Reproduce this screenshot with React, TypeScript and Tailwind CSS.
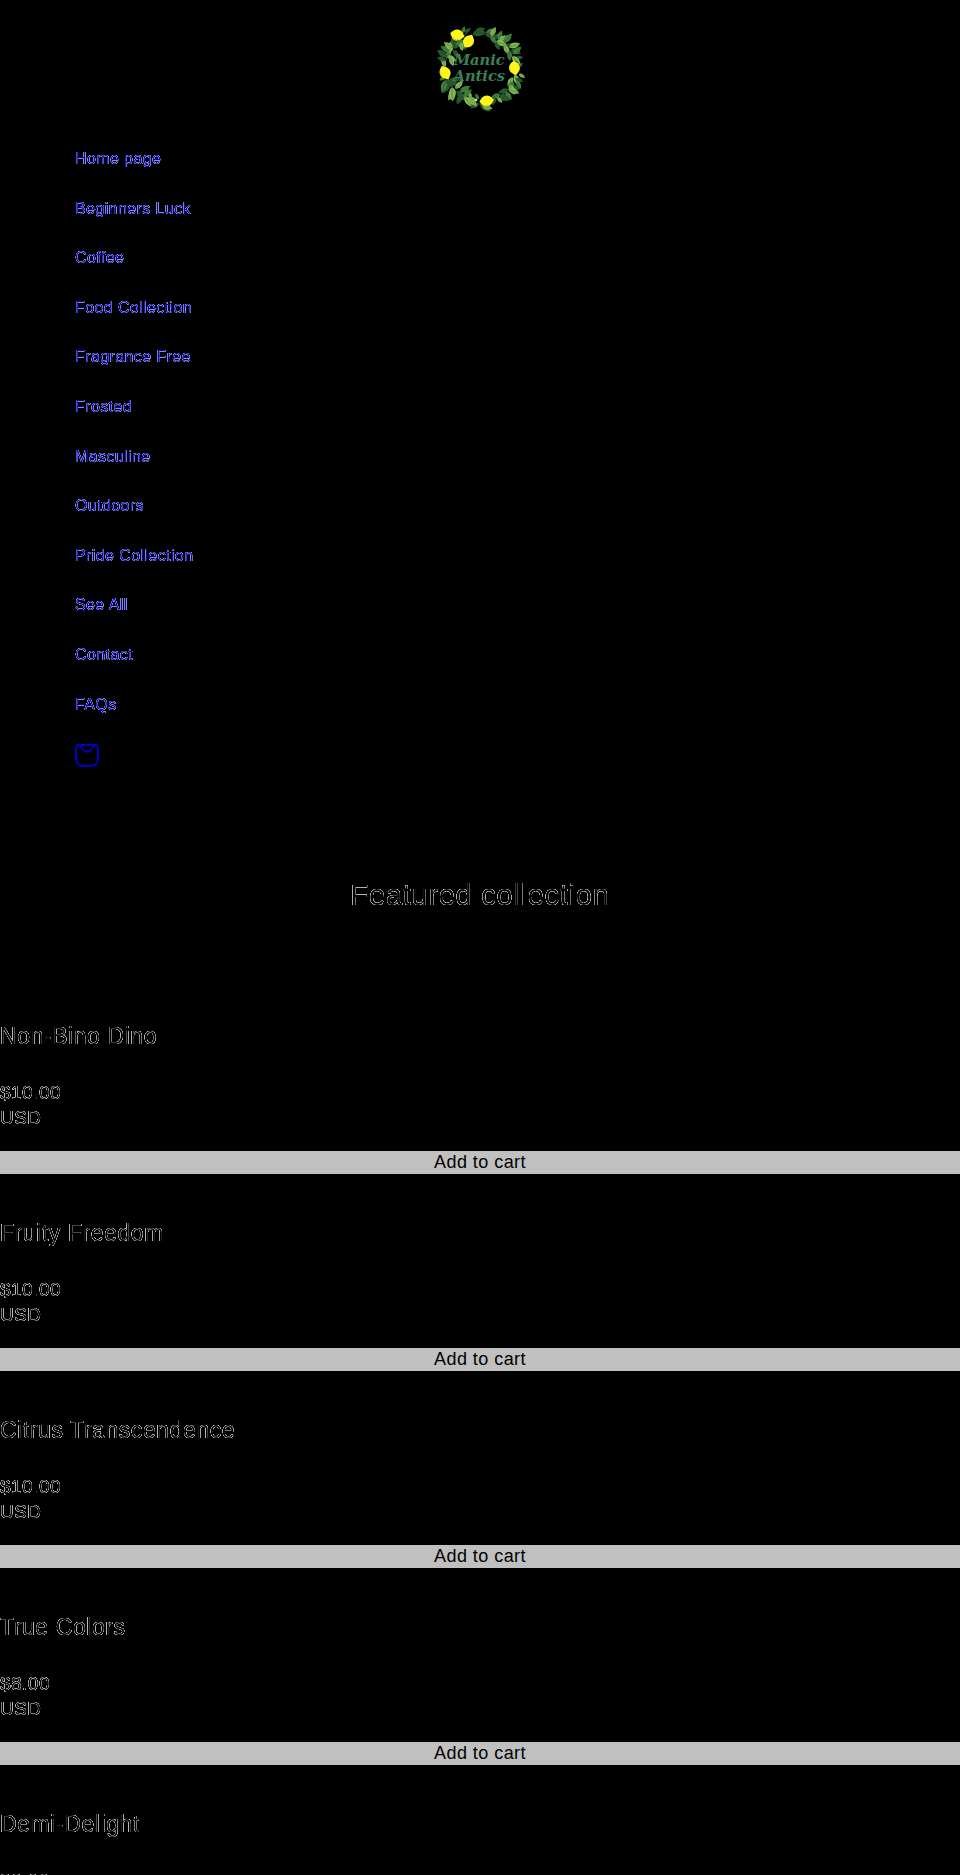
const LINKS = [
  "Home page",
  "Beginners Luck",
  "Coffee",
  "Food Collection",
  "Fragrance Free",
  "Frosted",
  "Masculine",
  "Outdoors",
  "Pride Collection",
  "See All",
  "Contact",
  "FAQs",
];

const PRODUCTS = [
  { name: "Non-Bino Dino", price: "$10.00" },
  { name: "Fruity Freedom", price: "$10.00" },
  { name: "Citrus Transcendence", price: "$10.00" },
  { name: "True Colors", price: "$8.00" },
  { name: "Demi-Delight", price: "$8.00" },
];

// Stacked shadows sit exactly behind the glyphs, so only the soft edges show.
const EDGE = "will-change-transform text-black [text-shadow:0_0_#fff,0_0_#fff,0_0_#fff,0_0_#fff,0_0_#fff,0_0_#fff,0_0_#fff,0_0_#fff]";
const EDGE_BLUE = "will-change-transform text-[#0000b4] [text-shadow:0_0_#ddf,0_0_#ddf,0_0_#ddf,0_0_#ddf,0_0_#ddf,0_0_#ddf]";

const DARK = "#28592f";
const MID = "#43803c";
const LIGHT = "#80b854";

// x, y, direction in degrees, length, fill
const LEAVES: [number, number, number, number, string][] = [
  [158, 72, -8, 40, DARK], [165, 66, -20, 32, DARK], [198, 71, -28, 30, MID], [196, 72, 20, 30, DARK],
  [214, 78, -65, 30, LIGHT], [218, 82, -15, 26, DARK], [212, 78, 55, 28, MID], [235, 90, -70, 30, MID],
  [238, 92, -32, 28, LIGHT], [228, 94, 20, 36, LIGHT], [225, 98, 55, 26, DARK], [252, 98, -50, 36, MID],
  [258, 106, 5, 32, DARK], [252, 105, 62, 32, LIGHT], [268, 112, -20, 34, LIGHT], [273, 120, 20, 32, DARK],
  [268, 122, 88, 30, MID], [280, 132, -42, 32, MID], [286, 145, -10, 24, DARK], [276, 140, 42, 34, LIGHT],
  [286, 152, 80, 28, DARK], [296, 172, -50, 18, MID], [296, 192, 30, 22, LIGHT], [284, 194, 70, 34, LIGHT],
  [286, 206, 20, 25, DARK], [278, 202, 120, 30, LIGHT], [290, 214, 60, 26, MID], [277, 214, 105, 34, MID],
  [274, 230, 15, 28, DARK], [270, 225, 65, 32, LIGHT], [266, 238, 20, 34, LIGHT], [264, 238, 160, 30, DARK],
  [256, 246, 50, 30, MID], [250, 250, 100, 28, DARK], [240, 252, 155, 30, MID], [238, 260, 15, 36, DARK],
  [232, 262, 50, 22, LIGHT], [226, 262, 110, 25, DARK], [176, 268, -120, 20, MID], [170, 272, -165, 30, LIGHT],
  [176, 280, 150, 28, DARK], [180, 282, 35, 38, DARK], [187, 288, 15, 32, LIGHT], [152, 266, -100, 22, LIGHT],
  [150, 270, 40, 28, LIGHT], [145, 266, -160, 34, MID], [132, 258, -40, 30, MID], [134, 260, 55, 36, LIGHT],
  [125, 252, 115, 34, DARK], [120, 246, -30, 35, MID], [112, 242, 55, 34, DARK], [106, 236, -45, 32, LIGHT],
  [104, 238, 120, 38, LIGHT], [95, 230, -60, 30, DARK], [96, 232, 88, 42, LIGHT], [88, 222, 130, 36, DARK],
  [86, 216, -18, 36, DARK], [78, 210, 110, 38, MID], [78, 205, 60, 30, DARK], [76, 202, 155, 20, MID],
  [76, 170, -110, 28, LIGHT], [76, 158, -135, 25, LIGHT], [78, 150, -165, 28, DARK], [78, 145, -60, 30, MID],
  [80, 140, -145, 34, DARK], [83, 138, 30, 30, LIGHT], [85, 130, -110, 26, MID], [88, 130, -80, 38, LIGHT],
  [88, 124, -150, 30, MID], [98, 115, -145, 32, LIGHT], [98, 115, -45, 38, DARK], [90, 140, 70, 30, LIGHT],
  [105, 108, -120, 24, DARK], [108, 105, -25, 32, MID], [100, 120, 55, 30, DARK], [118, 98, 45, 30, DARK],
  [128, 70, -75, 22, MID], [135, 68, -40, 22, DARK], [115, 90, -165, 22, LIGHT], [122, 96, 80, 28, LIGHT],
];

const LEMONS: [number, number, number][] = [
  [112, 75, 12],
  [146, 94, -60],
  [75, 188, 62],
  [283, 174, 82],
  [200, 273, -8],
];

function Logo() {
  return (
    <svg className="h-[88px] w-[90px]" viewBox="45 45 270 264" role="img" aria-label="Manic Antics">
      <g fill="none" stroke="#30482c" strokeWidth="3">
        <path d="M158 72Q205 66 242 94T284 145Q296 180 284 213T226 262" />
        <path d="M187 284Q125 275 97 232T75 180Q72 130 112 100L145 64" />
      </g>
      {LEAVES.map(([x, y, angle, length, fill], i) => (
        <g key={i} transform={`translate(${x} ${y}) rotate(${angle}) scale(${length / 36})`}>
          <path d="M0 0C6-11 20-13 36 0C23 11 8 11 0 0Z" fill={fill} />
          <path d="M2 0L30 0" stroke="#183c21" strokeWidth="1" />
        </g>
      ))}
      {LEMONS.map(([x, y, angle], i) => (
        <g key={i} transform={`translate(${x} ${y}) rotate(${angle})`}>
          <path
            d="M-22-1Q-19-5-16-8C-8-19 8-20 16-8Q19-4 22-1Q20 4 16 7C8 19-8 18-16 8Q-18 5-22-1Z"
            fill="#fff51a"
          />
          <path d="M-14 8C-8 17 8 18 15 8C8 14-6 14-14 8Z" fill="#ded500" />
        </g>
      ))}
      <circle cx="168" cy="270" r="4" fill="#c9d5c5" />
      <g
        fill="#3a8055"
        fontFamily="DejaVu Serif, Liberation Serif, serif"
        fontStyle="italic"
        fontWeight="700"
        textAnchor="middle"
      >
        <text x="178" y="166" fontSize="44">Manic</text>
        <text x="178" y="213" fontSize="44">Antics</text>
      </g>
    </svg>
  );
}

function CartIcon() {
  return (
    <svg className="h-6 w-6" viewBox="0 0 24 24" fill="none" stroke="#0000c4" strokeWidth="2" aria-hidden="true">
      <path d="M2 2H22L23 6V15Q23 23 15 23H9Q1 23 1 15V6Z" strokeLinejoin="round" />
      <path d="M6 2C6 11 18 11 18 2" />
    </svg>
  );
}

function ProductCard({ name, price }: { name: string; price: string }) {
  return (
    <li>
      <h3 className={`text-[23px] leading-[30px] tracking-wide ${EDGE}`}>{name}</h3>
      <p className={`mt-[29px] text-[19px] leading-[25px] tracking-wide ${EDGE}`}>
        {price}
        <br />
        USD
      </p>
      <button
        type="button"
        className="mt-[21px] block w-full cursor-pointer bg-[#c0c0c0] text-lg leading-[23px] tracking-wide text-black"
      >
        Add to cart
      </button>
    </li>
  );
}

export default function App() {
  return (
    <div className="min-h-screen bg-black font-['Liberation_Sans',Arial,sans-serif]">
      <header className="pt-[25px]">
        <a href="#" className="mx-auto block w-fit">
          <Logo />
        </a>
        <nav className="mt-[21px] px-[75px]">
          <ul>
            {LINKS.map((link) => (
              <li key={link}>
                <a href="#" className={`block w-fit py-3 text-base leading-[1.6] tracking-wide ${EDGE_BLUE}`}>
                  {link}
                </a>
              </li>
            ))}
          </ul>
          <a href="#" aria-label="Cart" className="mt-[14px] block w-fit">
            <CartIcon />
          </a>
        </nav>
      </header>

      <main className="pt-[108px]">
        <h2 className={`text-center text-[29px] leading-10 tracking-wide ${EDGE}`}>Featured collection</h2>
        <ul className="mt-[106px] flex flex-col gap-11">
          {PRODUCTS.map((product) => (
            <ProductCard key={product.name} {...product} />
          ))}
        </ul>
      </main>
    </div>
  );
}
